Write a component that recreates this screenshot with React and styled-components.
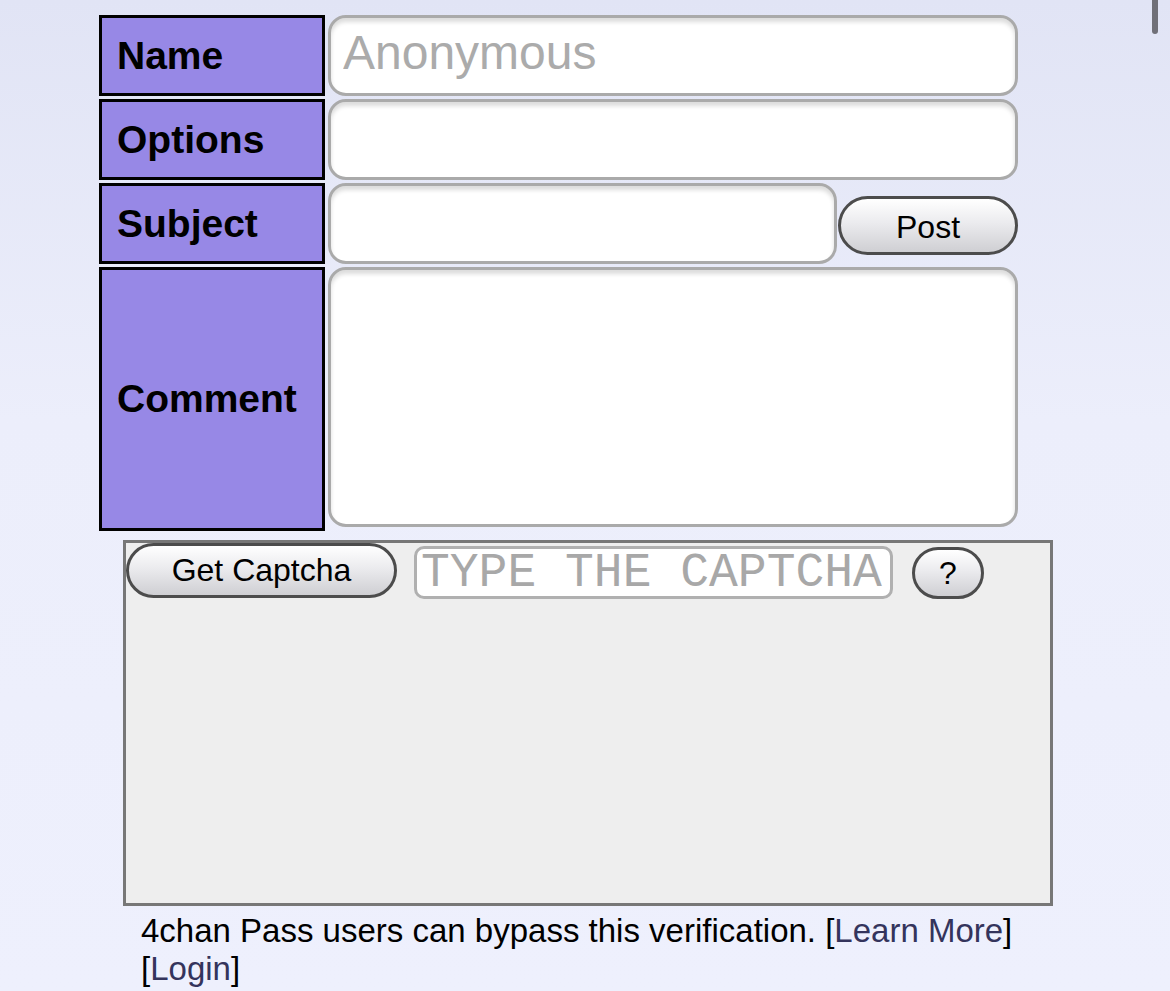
import React from "react";
import styled, { createGlobalStyle } from "styled-components";

const Global = createGlobalStyle`
  html, body {
    margin: 0;
    padding: 0;
  }
  body {
    min-height: 991px;
    background: linear-gradient(#e1e4f5 0, #eceefb 420px, #eef0fd 991px);
    font-family: "Liberation Sans", Arial, sans-serif;
    color: #000;
  }
`;

const Page = styled.div`
  padding: 15px 0 0 99px;
`;

const Form = styled.div`
  display: grid;
  grid-template-columns: 226px 690px;
  grid-template-rows: 81px 81px 81px 264px;
  column-gap: 3px;
  row-gap: 3px;
  width: 919px;
`;

const Label = styled.div`
  box-sizing: border-box;
  display: flex;
  align-items: center;
  padding-left: 15px;
  background: #9788e6;
  border: 3px solid #000;
  font-weight: bold;
  font-size: 39px;
`;

const fieldStyle = `
  box-sizing: border-box;
  background: #fff;
  border: 3px solid #aaa;
  border-radius: 18px;
  box-shadow: inset 0 4px 4px rgba(0, 0, 0, 0.14);
  font-family: "Liberation Sans", Arial, sans-serif;
  outline: none;
  margin: 0;
`;

const Input = styled.input`
  ${fieldStyle}
  width: 100%;
  height: 100%;
  padding: 0 0 6px 12px;
  font-size: 48px;
  &::placeholder {
    color: #ababab;
  }
`;

const TextArea = styled.textarea`
  ${fieldStyle}
  width: 100%;
  height: 260px;
  resize: none;
  padding: 12px;
  font-size: 32px;
`;

const SubjectCell = styled.div`
  display: flex;
  align-items: flex-start;
  gap: 1px;
`;

const SubjectInput = styled(Input)`
  width: 509px;
  flex: none;
`;

const Button = styled.button`
  box-sizing: border-box;
  flex: none;
  width: ${(p) => p.$w}px;
  height: ${(p) => p.$h}px;
  margin: 0;
  padding: 0;
  border: 3px solid #4c4c4c;
  border-radius: 30px;
  background: linear-gradient(#ffffff, #ebebee 45%, #cfcfd3);
  font-family: "Liberation Sans", Arial, sans-serif;
  font-size: 32px;
  color: #000;
`;

const PostButton = styled(Button)`
  margin-top: 13px;
  padding-top: 3px;
`;

const Captcha = styled.div`
  box-sizing: border-box;
  width: 930px;
  height: 366px;
  margin: 9px 0 0 24px;
  border: 3px solid #777;
  background: #eeeeee;
`;

const CaptchaBar = styled.div`
  display: flex;
  align-items: flex-start;
`;

const CaptchaInput = styled.input`
  box-sizing: border-box;
  width: 479px;
  height: 53px;
  margin: 3px 19px 0 17px;
  padding: 0 4px;
  border: 3px solid #b0b0b0;
  border-radius: 10px;
  background: #fff;
  font-family: "Liberation Mono", "Courier New", monospace;
  font-size: 48px;
  outline: none;
  &::placeholder {
    color: #a8a8a8;
  }
`;

const HelpButton = styled(Button)`
  margin-top: 4px;
`;

const Note = styled.div`
  width: 900px;
  margin: 6px 0 0 42px;
  font-size: 33px;
  line-height: 38px;
`;

const Link = styled.a`
  color: #34345c;
  text-decoration: none;
`;

const Scrollbar = styled.div`
  position: fixed;
  top: -4px;
  right: 12px;
  width: 6px;
  height: 38px;
  border-radius: 3px;
  background: #707078;
`;

export default function App() {
  return (
    <>
      <Global />
      <Page>
        <Form>
          <Label>Name</Label>
          <Input placeholder="Anonymous" />
          <Label>Options</Label>
          <Input />
          <Label>Subject</Label>
          <SubjectCell>
            <SubjectInput />
            <PostButton $w={180} $h={59}>Post</PostButton>
          </SubjectCell>
          <Label>Comment</Label>
          <TextArea />
        </Form>
        <Captcha>
          <CaptchaBar>
            <Button $w={271} $h={55}>Get Captcha</Button>
            <CaptchaInput placeholder="TYPE THE CAPTCHA" />
            <HelpButton $w={72} $h={52}>?</HelpButton>
          </CaptchaBar>
        </Captcha>
        <Note>
          4chan Pass users can bypass this verification. [<Link href="#">Learn More</Link>]
          [<Link href="#">Login</Link>]
        </Note>
      </Page>
      <Scrollbar />
    </>
  );
}
